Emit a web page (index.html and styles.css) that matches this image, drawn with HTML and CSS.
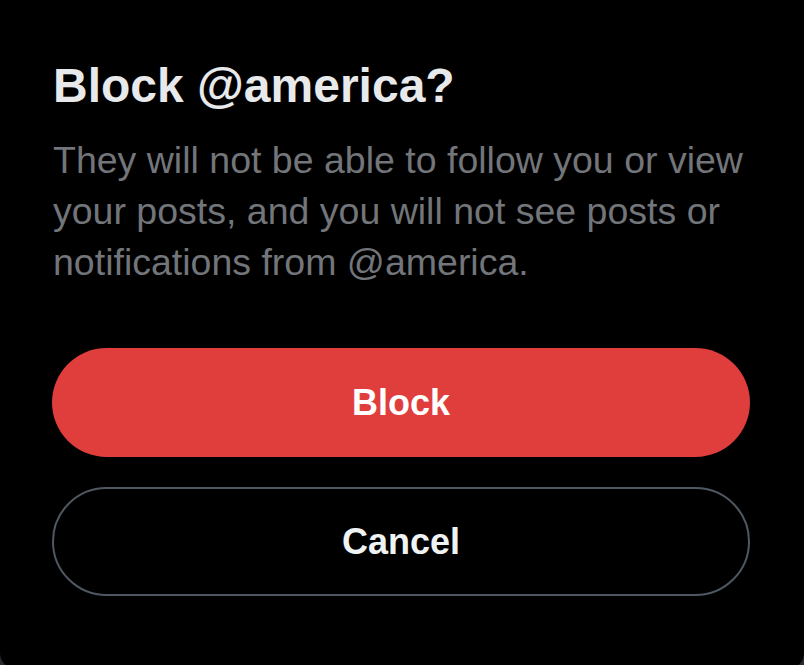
FILE: index.html
```html
<!DOCTYPE html>
<html lang="en">
<head>
<meta charset="utf-8">
<title>Block @america?</title>
<link rel="stylesheet" href="styles.css">
</head>
<body>
<div class="dialog">
  <h1 class="title">Block @america?</h1>
  <p class="message">They will not be able to follow you or view your posts, and you will not see posts or notifications from @america.</p>
  <div class="actions">
    <button class="btn btn-block">Block</button>
    <button class="btn btn-cancel">Cancel</button>
  </div>
</div>
</body>
</html>
```

FILE: styles.css
```css
html, body {
  margin: 0;
  padding: 0;
  background: #262b31;
  overflow: hidden;
  height: 100%;
}

.dialog {
  box-sizing: border-box;
  width: 804px;
  height: 669px;
  background: #000;
  border-radius: 0 0 16px 16px;
  padding: 58px 53px 0 53px;
  font-family: "Liberation Sans", Arial, sans-serif;
}

.title {
  margin: 0;
  font-size: 48px;
  line-height: 56px;
  font-weight: 700;
  color: #e7e9ea;
}

.message {
  margin: 21px 0 0 0;
  font-size: 37.5px;
  line-height: 51px;
  color: #727579;
}

.actions {
  margin-top: 60px;
  display: flex;
  flex-direction: column;
  gap: 30px;
}

.btn {
  box-sizing: border-box;
  width: 698px;
  height: 109px;
  margin-left: -1px;
  border-radius: 55px;
  font-family: "Liberation Sans", Arial, sans-serif;
  font-size: 36px;
  font-weight: 700;
  display: flex;
  align-items: center;
  justify-content: center;
  padding: 0;
}

.btn-block {
  background: #e03d3d;
  color: #ffffff;
  border: none;
}

.btn-cancel {
  background: #000;
  color: #eff3f4;
  border: 2px solid #4f5861;
}
```
